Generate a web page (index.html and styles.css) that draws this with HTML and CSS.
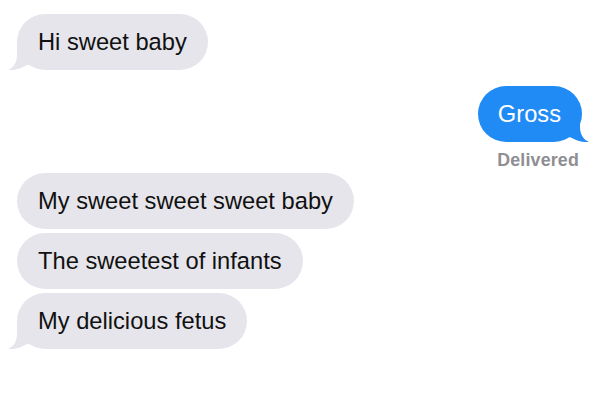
FILE: index.html
```
<!DOCTYPE html>
<html lang="en">
<head>
<meta charset="utf-8">
<title>Messages</title>
<link rel="stylesheet" href="styles.css">
</head>
<body>
<main class="thread">
  <div class="bubble them tail">
    <span class="text">Hi sweet baby</span>
    <svg class="tail-svg" width="26" height="26" viewBox="0 0 26 26" aria-hidden="true"><path d="M9,0 L9,11 C9,19 5,24 0,26 C6,26.5 12,25 16,22.5 L22,20 L22,0 Z"/></svg>
  </div>

  <div class="bubble me tail">
    <span class="text">Gross</span>
    <svg class="tail-svg" width="26" height="26" viewBox="0 0 26 26" aria-hidden="true"><path d="M9,0 L9,11 C9,19 5,24 0,26 C6,26.5 12,25 16,22.5 L22,20 L22,0 Z"/></svg>
  </div>
  <div class="status">Delivered</div>

  <div class="group">
    <div class="bubble them"><span class="text">My sweet sweet sweet baby</span></div>
    <div class="bubble them"><span class="text">The sweetest of infants</span></div>
    <div class="bubble them tail">
      <span class="text">My delicious fetus</span>
      <svg class="tail-svg" width="26" height="26" viewBox="0 0 26 26" aria-hidden="true"><path d="M9,0 L9,11 C9,19 5,24 0,26 C6,26.5 12,25 16,22.5 L22,20 L22,0 Z"/></svg>
    </div>
  </div>
</main>
</body>
</html>
```
FILE: styles.css
```
html, body {
  margin: 0;
  padding: 0;
  background: #ffffff;
}

.thread {
  display: flex;
  flex-direction: column;
  padding: 14px 18px 0 17px;
  font-family: "Liberation Sans", Arial, sans-serif;
}

.bubble {
  position: relative;
  height: 56px;
  padding: 0 21px;
  border-radius: 28px;
  display: flex;
  align-items: center;
  font-size: 23.7px;
  line-height: 28px;
  white-space: nowrap;
}

.text {
  position: relative;
  z-index: 1;
}

.them {
  align-self: flex-start;
  background: #e6e5eb;
  color: #111111;
}

.them .tail-svg {
  fill: #e6e5eb;
}

.me {
  align-self: flex-end;
  margin-top: 16px;
  padding: 0 21px 0 20px;
  background: #218bf5;
  color: #ffffff;
}

.me .tail-svg {
  fill: #218bf5;
  left: auto;
  right: -7px;
  transform: scaleX(-1);
}

.tail-svg {
  position: absolute;
  left: -9px;
  bottom: 0;
  display: block;
}

.status {
  align-self: flex-end;
  margin-top: 8px;
  margin-right: 3px;
  font-size: 17.8px;
  line-height: 20px;
  font-weight: 700;
  letter-spacing: 0.2px;
  color: #8e8e93;
}

.group {
  display: flex;
  flex-direction: column;
  gap: 4px;
  margin-top: 3px;
}
```
